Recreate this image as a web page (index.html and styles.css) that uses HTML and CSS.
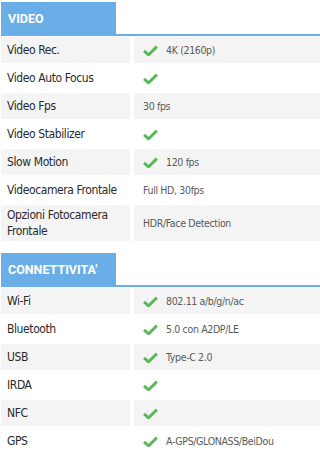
FILE: index.html
```html
<!DOCTYPE html>
<html>

<head>
  <title>Scheda tecnica</title>
  <link rel="stylesheet" href="styles.css">
</head>

<body>
  <svg style="display: none">
    <symbol id="ok" viewBox="0 0 16 12">
      <path d="M1 6.5 L5.8 10.8 L15 1.8" fill="none" stroke="currentColor" stroke-width="3.2" stroke-linejoin="miter" />
    </symbol>
  </svg>

  <div class="spec">
    <div class="spec-head"><span class="tab">VIDEO</span></div>
    <div class="spec-grid">
      <div class="k">Video Rec.</div>
      <div class="v"><svg class="ok"><use href="#ok" /></svg>4K (2160p)</div>
      <div class="k">Video Auto Focus</div>
      <div class="v"><svg class="ok"><use href="#ok" /></svg></div>
      <div class="k">Video Fps</div>
      <div class="v">30 fps</div>
      <div class="k">Video Stabilizer</div>
      <div class="v"><svg class="ok"><use href="#ok" /></svg></div>
      <div class="k">Slow Motion</div>
      <div class="v"><svg class="ok"><use href="#ok" /></svg>120 fps</div>
      <div class="k">Videocamera Frontale</div>
      <div class="v">Full HD, 30fps</div>
      <div class="k">Opzioni Fotocamera Frontale</div>
      <div class="v">HDR/Face Detection</div>
    </div>
  </div>

  <div class="spec">
    <div class="spec-head"><span class="tab">CONNETTIVITA'</span></div>
    <div class="spec-grid">
      <div class="k">Wi-Fi</div>
      <div class="v"><svg class="ok"><use href="#ok" /></svg>802.11 a/b/g/n/ac</div>
      <div class="k">Bluetooth</div>
      <div class="v"><svg class="ok"><use href="#ok" /></svg>5.0 con A2DP/LE</div>
      <div class="k">USB</div>
      <div class="v"><svg class="ok"><use href="#ok" /></svg>Type-C 2.0</div>
      <div class="k">IRDA</div>
      <div class="v"><svg class="ok"><use href="#ok" /></svg></div>
      <div class="k">NFC</div>
      <div class="v"><svg class="ok"><use href="#ok" /></svg></div>
      <div class="k">GPS</div>
      <div class="v"><svg class="ok"><use href="#ok" /></svg>A-GPS/GLONASS/BeiDou</div>
    </div>
  </div>
</body>

</html>
```

FILE: styles.css
```css
* {
  box-sizing: border-box;
}

body {
  font-family: "DejaVu Sans Condensed", Roboto, sans-serif;
  font-stretch: condensed;
  margin: 0;
  padding: 2px 0 0 1px;
  background-color: #fff;
}

.spec {
  margin-bottom: 12px;
}

/* blue tab sitting on a thin line */
.spec-head {
  border-bottom: 2px solid #6aaee8;
}

.tab {
  display: inline-block;
  width: 115px;
  height: 32px;
  line-height: 33px;
  padding-left: 7px;
  background-color: #6aaee8;
  color: #fff;
  font-family: Roboto, sans-serif;
  font-stretch: normal;
  font-weight: bold;
  font-size: 12.5px;
  vertical-align: bottom;
}

.spec-grid {
  display: grid;
  grid-template-columns: 129px 1fr;
  column-gap: 4px;
  row-gap: 2px;
  margin-top: 1px;
}

.k,
.v {
  min-height: 26px;
  display: flex;
  align-items: center;
}

.k {
  padding: 2px 6px;
  font-size: 12px;
  line-height: 16px;
  letter-spacing: -0.4px;
  color: #2a2a2a;
}

.v {
  padding: 0 9px;
  font-size: 10.5px;
  letter-spacing: -0.35px;
  color: #5a5a5a;
}

/* every other row gets the grey band */
.k:nth-child(4n+1),
.v:nth-child(4n+2) {
  background-color: #f4f4f4;
}

.ok {
  width: 15px;
  height: 11px;
  margin-right: 8px;
  color: #5cb85c;
  flex-shrink: 0;
}
```
